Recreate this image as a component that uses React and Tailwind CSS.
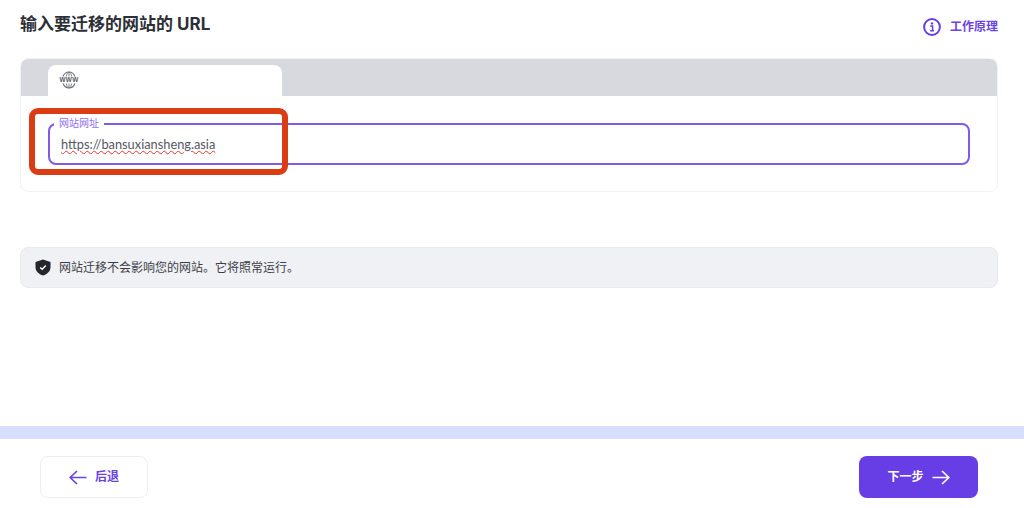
import React from 'react';

const cjk = "font-['Inter','Noto_Sans_CJK_SC',sans-serif]";

const WwwIcon = () => (
    <svg width="20" height="18" viewBox="0 0 20 18" fill="none">
        <path d="M4 5.5 C5.2 2.6 7.4 1 10 1 C12.6 1 14.8 2.6 16 5.5" stroke="#74767e" strokeWidth="1.2" />
        <path d="M7.3 5.5 C7.8 3 8.8 1.2 10 1 C11.2 1.2 12.2 3 12.7 5.5 M10 1 V5.5" stroke="#74767e" strokeWidth="0.9" />
        <path d="M4 12.5 C5.2 15.4 7.4 17 10 17 C12.6 17 14.8 15.4 16 12.5" stroke="#74767e" strokeWidth="1.2" />
        <path d="M7.3 12.5 C7.8 15 8.8 16.8 10 17 C11.2 16.8 12.2 15 12.7 12.5 M10 17 V12.5" stroke="#74767e" strokeWidth="0.9" />
        <text x="10" y="11.2" textAnchor="middle" fontSize="6.4" fontWeight="700" letterSpacing="0.3" fill="#55575f" fontFamily="Liberation Sans, sans-serif">WWW</text>
    </svg>
);

const ShieldIcon = () => (
    <svg width="16" height="17" viewBox="0 0 16 17">
        <path d="M8 0.5 L15.5 3 V8 C15.5 12.3 12.4 15.2 8 16.5 C3.6 15.2 0.5 12.3 0.5 8 V3 Z" fill="#24262b" />
        <path d="M5.2 8.4 L7.2 10.3 L10.8 6.6" stroke="#fff" strokeWidth="1.4" fill="none" />
    </svg>
);

const InfoIcon = () => (
    <svg width="18" height="18" viewBox="0 0 18 18" fill="none">
        <circle cx="9" cy="9" r="7.9" stroke="#673de6" strokeWidth="2" />
        <circle cx="9" cy="5.4" r="1.2" fill="#673de6" />
        <path d="M7.2 8 H9.6 V12.4 M7.1 12.8 H11" stroke="#673de6" strokeWidth="1.5" />
    </svg>
);

const ArrowIcon = ({ flip }) => (
    <svg width="18" height="15" viewBox="0 0 18 15" fill="none" className={flip ? 'rotate-180' : ''}>
        <path d="M0.5 7.5 H16.5 M10 1 L16.8 7.5 L10 14" stroke="currentColor" strokeWidth="1.7" />
    </svg>
);

const App = () => {
    return (
        <div className={`relative w-[1024px] h-[508px] bg-white overflow-hidden flex flex-col ${cjk}`}>
            <div className="flex justify-between pl-5 pr-[26px] pt-3.5 h-[58px]">
                <h1 className="text-[17px] leading-5 font-bold text-[#2d2f36]">输入要迁移的网站的 URL</h1>
                <a className="flex items-center gap-[9px] h-[26px] text-xs font-bold text-[#6a43e4]">
                    <InfoIcon />
                    <span>工作原理</span>
                </a>
            </div>

            <div className="ml-5 mr-[26px] h-[134px] rounded-lg border border-[#f3f3f6] overflow-hidden">
                <div className="h-[38px] -mt-px -mx-px bg-[#d8d9de] pl-7 pt-[7px]">
                    <div className="w-[234px] h-[31px] bg-white rounded-t-lg pl-[11px] pt-1.5">
                        <WwwIcon />
                    </div>
                </div>
                <div className="relative mt-[27px] mx-[27px] h-[42px] border-2 border-[#7d5ce8] rounded-lg flex items-center pl-[11px] pt-px">
                    <span className="absolute -top-[8px] left-[4px] bg-white px-[5px] text-[10px] leading-[12px] text-[#8f6df0]">网站网址</span>
                    <span className="font-['Lato','Noto_Sans_CJK_SC',sans-serif] text-[12.8px] text-[#55575f] underline decoration-wavy decoration-[#e8352e] decoration-1 underline-offset-1">https://bansuxiansheng.asia</span>
                </div>
            </div>

            <div className="mt-[55px] ml-5 mr-[26px] h-[41px] rounded-lg border border-[#e9eaf0] bg-[#f0f1f5] flex items-center pl-[14px] gap-[8px]">
                <ShieldIcon />
                <span className="text-xs text-[#3c3e46]">网站迁移不会影响您的网站。它将照常运行。</span>
            </div>

            <div className="mt-[138px] h-[13px] bg-[#d6dffd]"></div>

            <div className="flex justify-between pt-[17px] pl-10 pr-[46px]">
                <button className="w-[108px] h-[42px] rounded-lg border border-[#eeeff3] bg-white flex items-center justify-center gap-2 text-xs font-bold text-[#6a43e4]">
                    <ArrowIcon flip />
                    <span>后退</span>
                </button>
                <button className="w-[119px] h-[42px] rounded-lg bg-[#673de6] flex items-center justify-center gap-2 text-xs font-bold text-white">
                    <span>下一步</span>
                    <ArrowIcon />
                </button>
            </div>

            {/* red annotation over the input */}
            <div className="absolute left-[29px] top-[108px] w-[259px] h-[67px] rounded-[9px] border-[6px] border-[#dc3c14]"></div>
        </div>
    );
};

export default App;
